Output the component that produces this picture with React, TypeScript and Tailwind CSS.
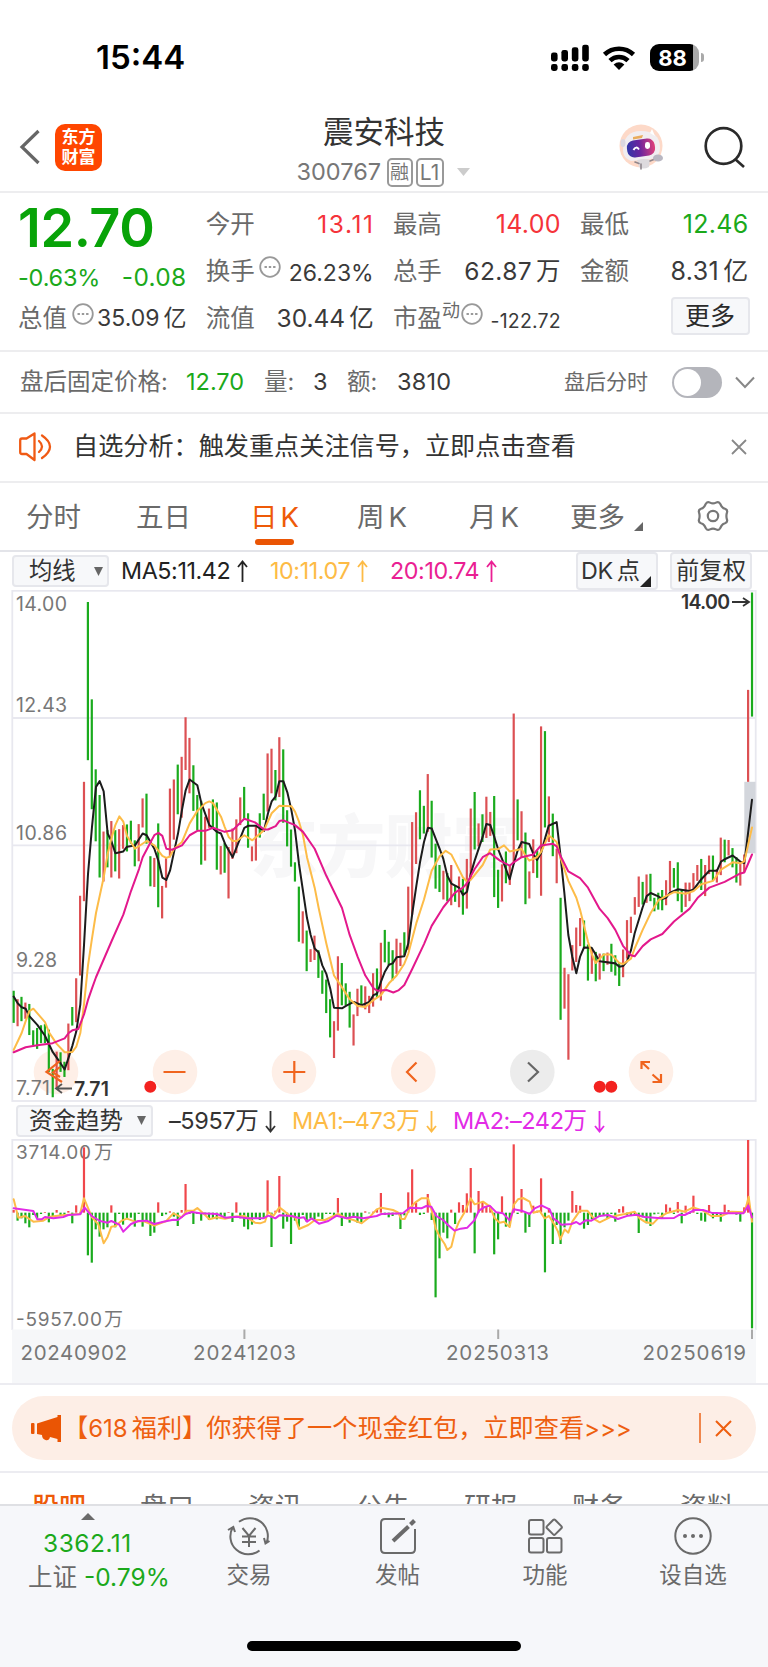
import React from "react";

/* Daily bars: r = up, g = down, then high and low in plot units. */
const CANDLES =
  "g1215,1310 r1240,1320 g1233,1305 r1250,1298 g1254,1346 g1332,1376 g1325,1387 g1317,1370 g1314,1370 g1330,1455 g1446,1530 r1395,1505 g1397,1455 g1425,1470 r1312,1450 g1263,1318 r1178,1308 r934,1170 r597,950 g65,533 g353,678 g560,773 g636,880 r744,892 g740,850 r713,880 g740,862 r737,883 r725,795 g723,803 g712,780 g770,847 r722,832 r646,732 g632,780 g817,906 r822,908 g720,968 r905,1001 r823,910 r617,820 r590,768 g546,693 r523,703 r406,562 r467,631 g548,683 g636,740 g653,842 r700,830 r676,733 g649,735 g658,857 r787,871 g778,866 r790,942 r735,825 r708,808 r643,725 g612,706 g690,792 r788,832 r730,830 g690,762 g632,710 r513,685 r499,631 g562,652 r465,642 g501,718 g681,788 g738,848 g835,892 g907,1070 r980,1075 g1037,1157 r1092,1130 r1052,1124 g1095,1177 g1155,1224 g1182,1281 g1240,1353 r1305,1414 r1113,1333 g1133,1258 g1193,1258 g1218,1324 r1285,1377 r1209,1290 g1199,1260 r1202,1270 r1230,1281 r1163,1262 g1149,1235 r1073,1244 g1035,1131 g1070,1140 g1095,1184 r1061,1165 r1073,1142 g1042,1110 r907,1094 r716,990 r687,840 g622,767 g668,750 r574,745 g653,821 g780,913 g843,923 r860,945 g867,950 r843,962 g905,952 r877,968 g884,990 r825,972 r676,885 g627,797 r720,788 g693,775 r641,763 r686,757 g639,938 g857,970 r841,951 g803,897 r846,902 r395,840 g649,770 r684,820 g747,959 r862,942 r767,867 g800,881 r433,934 g447,732 r640,775 g691,817 r795,897 g940,1301 r1147,1268 r1166,1419 r1080,1155 r1028,1130 r1000,1083 g1007,1090 g1078,1185 r1090,1165 g1100,1187 r1105,1182 g1105,1157 r1102,1138 g1076,1159 g1110,1170 g1133,1201 r1093,1175 r1006,1120 r996,1044 r938,990 r877,967 g893,960 r871,955 g869,950 g940,980 g925,975 g917,977 r888,962 r831,922 g852,910 g835,950 g915,983 r895,967 r895,950 r867,920 r843,890 g825,917 r843,935 r815,870 g815,890 r855,895 r762,873 g768,835 r769,815 g793,850 g820,895 r835,904 r812,865 r325,597 g37,404"
    .split(" ")
    .map((s) => ({ up: s[0] === "r", v: s.slice(1).split(",").map(Number) }));

/* Capital flow bars: end point of each bar; values above the zero line are inflows. */
const ZERO = 368;
const FLOWS = [
  360, 392, 385, 400, 412, 375, 385, 372, 366, 397, 380, 360, 378, 378, 363, 400, 346, 375, 172, 496, 518, 418, 440, 418,
  412, 346, 412, 372, 404, 385, 383, 410, 372, 410, 390, 438, 428, 337, 378, 373, 364, 380, 408, 360, 282, 372, 402, 372,
  392, 375, 390, 385, 388, 378, 380, 366, 396, 337, 385, 410, 418, 404, 385, 390, 385, 271, 471, 362, 258, 416, 395, 462,
  392, 410, 375, 395, 385, 392, 380, 390, 372, 372, 380, 324, 408, 385, 398, 380, 398, 398, 364, 370, 365, 360, 309, 375,
  382, 378, 373, 417, 376, 307, 238, 338, 375, 372, 312, 390, 622, 505, 428, 445, 359, 402, 337, 345, 310, 234, 490, 303,
  335, 350, 348, 493, 448, 319, 410, 408, 163, 372, 297, 428, 411, 347, 362, 265, 547, 355, 462, 405, 462, 412, 392, 303,
  345, 347, 416, 405, 388, 382, 380, 377, 385, 372, 395, 357, 349, 375, 377, 378, 429, 382, 400, 408, 373, 371, 385, 343,
  353, 372, 336, 400, 347, 372, 317, 372, 392, 395, 345, 385, 380, 395, 344, 360, 372, 374, 395, 352, 150, 715,
];

const MA5 =
  "41,1232 53,1252 65,1264 77,1268 88,1290 112,1316 135,1348 158,1396 182,1430 194,1448 206,1412 217,1378 229,1335 241,1255 252,1080 264,870 276,730 288,612 299,595 311,625 323,750 334,772 346,808 370,803 381,789 405,785 428,750 440,755 463,795 475,830 487,880 499,887 510,860 522,805 534,750 546,680 557,622 569,590 592,607 604,660 628,725 651,745 663,750 675,780 698,820 710,790 733,733 745,727 768,727 792,742 804,690 815,655 827,640 838,595 850,595 862,628 874,680 885,740 897,840 921,1000 932,1050 944,1090 956,1102 967,1140 979,1165 991,1210 1002,1265 1026,1267 1038,1260 1061,1248 1085,1258 1108,1248 1120,1228 1131,1224 1143,1188 1155,1158 1167,1138 1178,1134 1190,1116 1213,1113 1225,1075 1237,985 1249,905 1260,835 1272,775 1284,733 1295,735 1307,765 1319,795 1330,825 1342,875 1354,898 1377,910 1389,932 1401,922 1412,870 1424,830 1448,760 1459,722 1471,725 1483,760 1494,795 1506,825 1518,855 1529,885 1541,840 1553,800 1565,775 1588,781 1600,810 1611,828 1623,808 1635,765 1646,727 1670,716 1681,810 1693,925 1705,1050 1717,1115 1729,1163 1740,1115 1752,1087 1775,1088 1787,1108 1799,1128 1846,1134 1858,1144 1869,1142 1881,1128 1893,1095 1904,1045 1928,968 1940,935 1952,926 1975,936 1987,944 1998,940 2010,925 2033,915 2069,920 2081,915 2104,885 2128,860 2151,860 2163,833 2174,826 2198,815 2221,833 2233,837 2244,750 2256,650";
const MA10 =
  "41,1390 53,1365 65,1340 77,1305 88,1275 100,1268 124,1295 135,1308 147,1338 170,1372 194,1397 217,1396 229,1380 241,1340 252,1255 264,1140 276,1060 288,985 311,880 323,810 334,765 346,725 358,699 370,715 381,757 405,795 440,772 463,785 487,816 499,822 510,818 522,795 546,775 569,720 592,683 616,660 628,655 639,660 663,700 674,730 686,760 698,772 710,772 733,755 757,770 792,740 815,690 838,668 874,669 885,685 897,715 909,755 921,820 944,910 956,970 979,1075 1002,1170 1026,1205 1049,1240 1073,1260 1096,1263 1120,1243 1143,1228 1167,1193 1190,1170 1213,1135 1225,1105 1237,1060 1249,1015 1272,945 1295,860 1319,817 1337,801 1354,812 1365,833 1389,880 1401,892 1412,887 1448,843 1471,797 1494,796 1512,785 1529,803 1565,796 1576,815 1588,830 1611,820 1623,805 1646,755 1670,775 1681,820 1705,890 1729,940 1740,975 1764,1070 1775,1105 1787,1133 1811,1108 1834,1108 1858,1133 1869,1136 1893,1120 1904,1090 1928,1035 1952,985 1975,948 1998,935 2022,923 2057,928 2081,920 2104,900 2139,890 2163,857 2198,835 2221,838 2233,832 2244,785 2256,732";
const MA20 =
  "41,1397 77,1382 112,1376 158,1370 194,1356 206,1340 217,1332 235,1328 252,1285 264,1242 276,1208 288,1175 299,1150 334,1070 370,990 393,920 417,855 428,820 452,775 463,755 475,748 487,757 499,795 516,798 546,785 569,755 592,742 616,742 639,733 674,745 698,740 733,706 765,717 792,738 804,738 827,728 838,713 850,711 885,725 909,745 944,795 979,875 1026,970 1049,1050 1073,1115 1096,1170 1120,1207 1132,1215 1160,1213 1180,1220 1195,1214 1213,1198 1237,1150 1272,1077 1295,1023 1330,968 1365,925 1389,910 1401,897 1424,855 1448,820 1470,808 1500,830 1529,845 1541,835 1565,820 1600,812 1623,785 1658,780 1670,788 1681,815 1705,862 1740,882 1764,910 1799,973 1823,1000 1846,1035 1869,1082 1893,1110 1904,1113 1928,1083 1952,1063 1987,1047 2022,1010 2069,972 2093,940 2128,910 2174,893 2221,868 2233,865 2244,840 2256,812";
const FLOW_MA1 =
  "41,328 55,383 75,378 100,395 130,392 150,380 185,376 240,372 252,325 276,382 295,403 311,460 323,440 334,410 346,408 365,392 381,386 405,395 430,393 463,407 499,393 520,370 545,382 560,362 581,362 592,354 616,376 628,388 651,382 675,386 700,380 733,378 745,385 765,398 780,400 795,395 804,365 820,378 838,352 855,365 870,378 885,380 897,417 925,405 945,390 975,390 1014,372 1040,385 1060,390 1085,400 1110,380 1130,358 1144,353 1179,360 1194,367 1204,387 1214,387 1229,355 1246,337 1264,325 1284,325 1296,365 1307,415 1319,440 1334,462 1342,480 1354,470 1365,425 1377,395 1392,370 1412,325 1424,343 1449,335 1470,350 1484,385 1499,398 1512,395 1529,411 1541,345 1554,328 1569,324 1589,335 1600,368 1619,363 1634,385 1647,378 1664,405 1674,425 1681,448 1694,418 1705,428 1717,395 1740,362 1762,362 1784,388 1799,397 1834,380 1874,372 1904,365 1919,385 1934,395 1959,401 1974,385 1999,370 2034,360 2054,365 2080,352 2109,362 2134,378 2164,378 2194,365 2234,367 2246,320 2256,395";
const FLOW_MA2 =
  "41,355 100,363 112,388 125,388 135,381 160,385 190,381 205,375 240,373 254,353 275,378 300,393 323,398 334,393 358,404 370,425 393,402 415,393 440,392 463,402 490,395 520,389 534,390 557,372 575,366 600,370 651,372 675,383 710,380 740,385 790,385 805,377 826,385 838,376 875,378 897,384 912,382 921,395 935,385 957,401 985,393 1010,377 1040,385 1060,380 1090,385 1130,378 1144,372 1209,370 1229,353 1264,355 1279,348 1294,350 1309,378 1329,390 1344,405 1364,422 1382,416 1402,413 1424,390 1437,362 1452,352 1469,347 1489,367 1509,370 1529,391 1541,358 1565,362 1589,372 1604,355 1624,346 1649,358 1660,385 1674,395 1684,404 1714,402 1729,396 1740,403 1757,391 1774,392 1799,378 1824,375 1854,387 1884,377 1909,374 1934,381 1984,385 2022,384 2039,374 2054,375 2084,360 2109,360 2134,368 2164,370 2230,370 2245,347 2256,382";

const barX = (i: number) => 41 + i * 11.72;

function StatusBar() {
  return (
    <div className="flex h-[99px] items-center justify-between pt-4 pr-[64px] pl-[96px]">
      <span className="text-[33px] font-semibold text-black">15:44</span>
      <div className="flex items-center">
        <svg width="40" height="28" viewBox="0 0 40 28" className="mr-3">
          {[0, 1, 2, 3].map((i) => (
            <g key={i} fill="#000">
              <rect x={1 + i * 10.4} y={8.5 - i * 2.6} width="6.6" height={9 + i * 2.6} rx="2.4" />
              <rect x={1 + i * 10.4} y="20" width="6.6" height="7" rx="2.4" />
            </g>
          ))}
        </svg>
        <svg width="34" height="26" viewBox="0 0 34 26" className="mr-[14px]" fill="none" stroke="#000" strokeWidth="4.6">
          <path d="M2.5 9.5 A21 21 0 0 1 31.5 9.5" />
          <path d="M8 15.6 A13 13 0 0 1 26 15.6" />
          <path d="M17 25 L11.6 19.6 Q17 14.8 22.4 19.6 Z" fill="#000" stroke="none" />
        </svg>
        <div className="flex h-[27px] w-[49px] items-center justify-center overflow-hidden rounded-[9px] bg-[linear-gradient(90deg,#000_88%,#a9a9a9_88%)] pr-1 text-[22px] font-bold leading-none text-white">
          88
        </div>
        <div className="ml-[2px] h-[9px] w-[3px] rounded-r-full bg-[#a9a9a9]" />
      </div>
    </div>
  );
}

function Robot() {
  return (
    <svg width="46" height="46" viewBox="0 0 46 46" className="mt-[3px]">
      <defs>
        <linearGradient id="visor" x1="0" x2="1">
          <stop offset="0" stopColor="#3136a8" />
          <stop offset="0.45" stopColor="#6a249e" />
          <stop offset="1" stopColor="#e0407a" />
        </linearGradient>
      </defs>
      <circle cx="22" cy="22" r="21.500" fill="#fdd9c8" />
      <path d="M4 26C4 14 10 7 22 7S41 12 41 24Q41 33 32 35L12 37Q4 34 4 26Z" fill="#f1eef1" />
      <path d="M31 9L33 5L36 12Z" fill="#fff" />
      <ellipse cx="4" cy="19" rx="2.500" ry="4" fill="#dcd8e0" />
      <path d="M14 13L24 11L23 14L14 15.500Z" fill="#e9ac5c" />
      <rect x="8" y="15.500" width="28" height="17" rx="7" fill="url(#visor)" transform="rotate(-8 22 24)" />
      <path d="M14.500 26Q17 21.500 20 25.500" fill="none" stroke="#fff" strokeWidth="2" />
      <rect x="26" y="18" width="5" height="7" rx="2.400" fill="#fff" />
      <path d="M18 36Q25 34 31 36L30 43Q24 46 20 43Z" fill="#dddade" />
      <path d="M16 38l4 1.500M31 37l5-2M22 40v5" stroke="#8f868c" strokeWidth="1.600" strokeLinecap="round" />
      <ellipse cx="39" cy="34" rx="5" ry="3.600" fill="#b9b7c2" />
    </svg>
  );
}

function Header() {
  return (
    <div className="flex h-[92px] items-center pr-[22px] pl-[19px]">
      <div className="flex w-[206px] items-center pt-[4px]">
        <svg width="22" height="36" viewBox="0 0 22 36" fill="none" stroke="#666" strokeWidth="3.2">
          <path d="M19.5 2L3 18L19.5 34" />
        </svg>
        <div className="ml-[14px] flex h-[47px] w-[47px] flex-col items-center justify-center rounded-[10px] bg-[#ff4600] text-[17px] font-bold leading-[20px] text-white">
          <span>东方</span>
          <span>财富</span>
        </div>
      </div>
      <div className="flex flex-1 flex-col items-center pt-[12px] pr-[76px]">
        <div className="h-[42px] text-[30.5px] leading-[40px] text-[#333]">震安科技</div>
        <div className="flex h-[37px] items-center pr-[2px]">
          <span className="w-[90px] text-[23.5px] text-[#777]">300767</span>
          <span className="flex h-[29px] w-[26px] items-center justify-center rounded-[5px] border-2 border-[#999] text-[19px] leading-none text-[#777]">
            融
          </span>
          <span className="ml-[3px] flex h-[29px] w-[28px] items-center justify-center rounded-[5px] border-2 border-[#999] text-[21px] leading-none text-[#777]">
            L1
          </span>
          <svg width="13" height="8" viewBox="0 0 13 8" className="ml-[13px]">
            <path d="M0 0H13L6.5 8Z" fill="#ccc" />
          </svg>
        </div>
      </div>
      <div className="flex w-[127px] items-center justify-between">
        <Robot />
        <svg width="43" height="44" viewBox="0 0 43 44" fill="none" stroke="#2a2a2a" strokeWidth="2.7" className="mt-1">
          <circle cx="20.500" cy="21" r="17.800" />
          <path d="M32 34L41 42" />
        </svg>
      </div>
    </div>
  );
}

const Dots = () => (
  <svg width="22" height="22" viewBox="0 0 22 22" className="mb-[9px] shrink-0">
    <circle cx="11" cy="11" r="9.8" fill="none" stroke="#999" strokeWidth="1.8" />
    <path d="M5.5 11h2.4M9.8 11h2.4M14.1 11h2.4" stroke="#999" strokeWidth="2.2" />
  </svg>
);

function Stat({ label, value, color = "text-[#3a3a3a]", extra, small = "text-[24.5px] tracking-[0.4px]" }: { label: string; value: React.ReactNode; color?: string; extra?: React.ReactNode; small?: string }) {
  return (
    <div className="flex h-[47px] items-center">
      <span className="text-[24.5px] text-[#6a6a6a]">{label}</span>
      {extra}
      <span className={"ml-auto whitespace-nowrap " + small + " " + color}>{value}</span>
    </div>
  );
}

function Quote() {
  return (
    <div className="grid h-[159px] grid-cols-[168.500px_168px_168px_168.500px] gap-x-[19.2px] border-t-2 border-[#ededef] pt-[8px] pl-[18px]">
      <div>
        <div className="h-[53px] text-[54px] font-semibold leading-[53px] tracking-[-0.4px] text-[#08a308]">12.70</div>
        <div className="flex h-[41px] items-center justify-between pt-[6px] text-[#1ba91b]">
          <span className="text-[23.5px] tracking-[-0.2px]">-0.63%</span>
          <span className="text-[24.5px] tracking-[0.3px]">-0.08</span>
        </div>
        <Stat label="总值" extra={<span className="ml-[5px]"><Dots /></span>} value={<>35.09<span className="ml-1">亿</span></>} small="text-[23px]" />
      </div>
      <div>
        <Stat label="今开" value="13.11" color="text-[#f5333a]" small="text-[24.5px] tracking-[1.6px] -mr-[1px]" />
        <Stat label="换手" extra={<span className="ml-[4px]"><Dots /></span>} value="26.23%" small="text-[23px] pt-[3px]" />
        <Stat label="流值" value={<>30.44<span className="ml-1">亿</span></>} small="text-[24.5px]" />
      </div>
      <div>
        <Stat label="最高" value="14.00" color="text-[#f5333a]" small="text-[25px] tracking-[0.3px]" />
        <Stat label="总手" value={<>62.87<span className="ml-1">万</span></>} />
        <Stat
          label="市盈"
          extra={<><span className="mb-4 text-[18px] leading-none text-[#6a6a6a]">动</span><span className="ml-[1px]"><Dots /></span></>}
          value="-122.72"
          small="text-[19.5px] tracking-[0.2px] pt-[6px]"
        />
      </div>
      <div>
        <Stat label="最低" value="12.46" color="text-[#1ba91b]" small="text-[25px] tracking-[0.3px]" />
        <Stat label="金额" value={<>8.31<span className="ml-1">亿</span></>} small="text-[25px] tracking-[0.4px]" />
        <div className="flex h-[47px] items-center justify-end pb-[5px]">
          <button className="-mr-[1px] h-[38px] w-[79px] rounded-[4px] border-2 border-[#e6e7ec] bg-[#f7f8fa] text-[25px] leading-none text-[#2b2b2b]">更多</button>
        </div>
      </div>
    </div>
  );
}

function AfterHours() {
  return (
    <div className="flex h-[62px] items-center border-t-2 border-[#ededef] pl-[20px] text-[23.5px] text-[#3a3a3a]">
      <span className="w-[166px] text-[#6a6a6a]">盘后固定价格:</span>
      <span className="w-[78px] text-[#1ba91b]">12.70</span>
      <span className="w-[49px] text-[#6a6a6a]">量:</span>
      <span className="w-[34px]">3</span>
      <span className="w-[50px] text-[#6a6a6a]">额:</span>
      <span className="w-[167px] tracking-[0.2px]">3810</span>
      <span className="w-[108px] text-[21px] text-[#6a6a6a]">盘后分时</span>
      <span className="flex h-[31px] w-[50px] items-center rounded-full bg-[#b4b5bb] p-[2px]">
        <span className="h-[27px] w-[27px] rounded-full bg-white" />
      </span>
      <svg width="20" height="13" viewBox="0 0 20 13" className="ml-[13px]" fill="none" stroke="#888" strokeWidth="2">
        <path d="M1 1.5L10 11L19 1.5" />
      </svg>
    </div>
  );
}

function Notice() {
  return (
    <div className="flex h-[69px] items-center border-t-2 border-[#ededef] pb-[2px] pl-[19px]">
      <svg width="34" height="30" viewBox="0 0 34 30" fill="none" stroke="#f05a14" strokeWidth="2.300" strokeLinejoin="round">
        <path d="M7.5 6.5H3Q1.200 6.500 1.200 8.500V20Q1.200 22 3 22H7.500L15.500 28V1.500Z" />
        <path d="M20 9Q26 14.5 20 20M23 3.5Q39 14.5 23 26" strokeLinecap="round" />
      </svg>
      <span className="ml-[20px] w-[658px] text-[25.15px] text-[#333]">自选分析：触发重点关注信号，立即点击查看</span>
      <svg width="16" height="16" viewBox="0 0 16 16" stroke="#888" strokeWidth="1.8">
        <path d="M1 1L15 15M15 1L1 15" />
      </svg>
    </div>
  );
}

function PeriodTabs() {
  return (
    <div className="flex h-[69px] items-center border-t-2 border-[#ededef] pb-[1px] text-[27.5px] text-[#6a6a6a]">
      <span className="w-[136px] pt-[3px] pl-[26px]">分时</span>
      <span className="w-[114px] pt-[3px]">五日</span>
      <span className="relative w-[107px] pt-[3px] text-[#ee5a08]">
        日<span className="ml-[3px]">K</span>
        <span className="absolute top-[45px] left-[5px] h-[6px] w-[39px] rounded-full bg-[#ea5504]" />
      </span>
      <span className="w-[112px] pt-[3px]">
        周<span className="ml-[4px]">K</span>
      </span>
      <span className="w-[101px] pt-[3px]">
        月<span className="ml-[4px]">K</span>
      </span>
      <span className="flex w-[126px] items-center pt-[3px]">
        更多
        <svg width="9" height="9" viewBox="0 0 9 9" className="mt-[17px] ml-[9px]">
          <path d="M9 0V9H0Z" fill="#666" />
        </svg>
      </span>
      <svg width="34" height="32" viewBox="0 0 34 32" fill="none" stroke="#777" strokeWidth="2.2" strokeLinejoin="round">
        <path d="M10 3.5Q11.5 1.2 14 2.6Q17 4.2 20 2.6Q22.5 1.2 24 3.5L25.6 6.4Q26.7 8.2 29 8.8Q31.8 9.8 31 12.4Q29.8 16 31 19.6Q31.8 22.2 29 23.2Q26.7 23.8 25.6 25.6L24 28.5Q22.5 30.8 20 29.4Q17 27.8 14 29.4Q11.5 30.8 10 28.5L8.4 25.6Q7.3 23.8 5 23.2Q2.2 22.2 3 19.6Q4.2 16 3 12.4Q2.2 9.8 5 8.8Q7.3 8.2 8.4 6.4Z" />
        <circle cx="17" cy="16" r="5.2" />
      </svg>
    </div>
  );
}

const Arrow = ({ down = false }: { down?: boolean }) => (
  <svg width="11" height="23" viewBox="0 0 11 23" fill="none" stroke="currentColor" strokeWidth="1.8" className={down ? "rotate-180" : ""}>
    <path d="M5.5 22V1.500M1 7L5.500 1.500L10 7" />
  </svg>
);

const Caret = () => (
  <svg width="9" height="9" viewBox="0 0 9 9">
    <path d="M0 0H9L4.5 9Z" fill="#666" />
  </svg>
);

function MaRow() {
  return (
    <div className="flex h-[40px] items-center border-t-2 border-[#e3e4e9] pl-[12px] text-[23.3px] tracking-[-0.4px]">
      <div className="flex h-[32px] w-[97px] items-center justify-between rounded-[4px] border-2 border-[#e6e7ec] bg-[#f7f8fa] pr-1 pl-[15px] tracking-normal text-[#333]">
        均线 <Caret />
      </div>
      <span className="ml-[12px] flex w-[149px] items-center gap-[7px] text-[#222]">MA5:11.42 <Arrow /></span>
      <span className="flex w-[120px] items-center gap-[7px] text-[#fdbb45]">10:11.07 <Arrow /></span>
      <span className="flex w-[186px] items-center gap-[7px] text-[#ea1f93]">20:10.74 <Arrow /></span>
      <div className="flex h-[38px] w-[82px] items-center rounded-[4px] border-2 border-[#e6e7ec] bg-[#f7f8fa] pl-[3px] text-[#333]">
        DK<span className="ml-1">点</span>
        <svg width="11" height="11" viewBox="0 0 11 11" className="mt-[20px]">
          <path d="M11 0V11H0Z" fill="#222" />
        </svg>
      </div>
      <div className="ml-[12px] flex h-[38px] w-[82px] items-center justify-center whitespace-nowrap rounded-[4px] border-2 border-[#e6e7ec] bg-[#f7f8fa] tracking-normal text-[#333]">
        前复权
      </div>
    </div>
  );
}

const LINE = { fill: "none", strokeLinejoin: "round" as const, strokeLinecap: "round" as const };

function PriceChart() {
  return (
    <svg width="768" height="512" viewBox="0 590 768 512" className="block" fontFamily="Inter">
      <text x="250" y="872" fontSize="68" fontWeight="900" fill="#f7f7f8" textLength="270" fontFamily="Noto Sans CJK SC">东方财富</text>
      <g stroke="#e8e8ef" strokeWidth="1.8" fill="none">
        <rect x="12.3" y="590.8" width="743.4" height="510.2" />
        <path d="M12 718H756M12 845.4H756M12 972.8H756" />
      </g>
      <rect x="744.3" y="781.8" width="11.2" height="71.5" fill="#d3d6dc" />
      <g fill="#feefe7">
        <circle cx="56" cy="1072" r="22.3" />
        <circle cx="175" cy="1072" r="22.3" />
        <circle cx="294" cy="1072" r="22.3" />
        <circle cx="413.3" cy="1072" r="22.3" />
        <circle cx="651" cy="1072" r="22.3" />
        <circle cx="532.3" cy="1072" r="22.3" fill="#ececec" />
      </g>
      <g transform="translate(0 580) scale(0.33333 0.33807)">
        {CANDLES.map((c, i) => (
          <path key={i} d={`M${barX(i)} ${c.v[0]}V${c.v[1]}`} stroke={c.up ? "#dc5053" : "#1aab1d"} strokeWidth="6.6" />
        ))}
        <polyline points={MA5} {...LINE} stroke="#1c1c1c" strokeWidth="6" />
        <polyline points={MA10} {...LINE} stroke="#fdbc48" strokeWidth="6" />
        <polyline points={MA20} {...LINE} stroke="#e3188c" strokeWidth="6" />
      </g>
      <g fill="none" stroke="#f0641e" strokeWidth="2.2">
        <path d="M60 1061L46.5 1072L62 1082M60 1067L53 1072.5L60 1077" />
        <path d="M163.5 1072H185.5M283.3 1072H305.3M294.3 1061V1083" />
        <path d="M416.5 1062.5L407 1072L416.5 1081.5" />
        <path d="M641.5 1069V1062H650M641.5 1062L649 1069M661 1074V1082H652.5M652.5 1074.5L661 1082" />
        <path d="M528 1062.5L538 1072L528 1081.5" stroke="#666" />
      </g>
      <g fill="#f3221f">
        <circle cx="150.3" cy="1086.8" r="6" />
        <circle cx="599.7" cy="1086.8" r="6" />
        <circle cx="611.3" cy="1086.8" r="6" />
      </g>
      <g fontSize="19.5" fill="#777">
        <text x="16" y="611" textLength="51">14.00</text>
        <text x="16" y="711.5" textLength="51">12.43</text>
        <text x="16" y="839.5" textLength="51">10.86</text>
        <text x="16" y="966.5" textLength="41">9.28</text>
        <text x="16" y="1094.5" textLength="34">7.71</text>
      </g>
      <g fontSize="19.5" fontWeight="600" fill="#333">
        <text x="74" y="1095.5" textLength="35">7.71</text>
        <text x="681" y="609" textLength="49">14.00</text>
      </g>
      <path d="M56 1088.5H72M62 1084L56 1088.5L62 1093" fill="none" stroke="#555" strokeWidth="1.8" />
      <path d="M732 602H748M743 598L749 602L743 606" fill="none" stroke="#333" strokeWidth="1.8" />
    </svg>
  );
}

function FlowRow() {
  return (
    <div className="flex h-[37px] items-center pl-[16px] text-[23.5px] tracking-[-0.4px]">
      <div className="flex h-[32px] w-[137px] items-center justify-between rounded-[4px] border-2 border-[#e6e7ec] bg-[#f7f8fa] pr-[5px] pl-[11px] tracking-normal text-[#333]">
        资金趋势 <Caret />
      </div>
      <span className="ml-[16px] flex w-[123px] items-center gap-[7px] pt-[1px] text-[#333]">–5957万 <Arrow down /></span>
      <span className="flex w-[161px] items-center gap-[7px] pt-[1px] text-[#fdbb45]">MA1:–473万 <Arrow down /></span>
      <span className="flex items-center gap-[7px] pt-[1px] text-[#e22be6]">MA2:–242万 <Arrow down /></span>
    </div>
  );
}

function FlowChart() {
  return (
    <svg width="768" height="244" viewBox="0 1139 768 244" className="block" fontFamily="Inter, Noto Sans CJK SC">
      <path d="M12.3 1330V1139.8H755.7V1330" fill="none" stroke="#e8e8ef" strokeWidth="1.8" />
      <rect x="12" y="1329.5" width="744" height="54.5" fill="#f6f7f9" />
      <g fontSize="19" fill="#777">
        <text x="16" y="1159" textLength="75">3714.00</text>
        <text x="94" y="1159">万</text>
        <text x="16" y="1326" textLength="86">-5957.00</text>
        <text x="104" y="1326">万</text>
      </g>
      <g transform="translate(0 1090) scale(0.33333)">
        {FLOWS.map((y, i) => (
          <path key={i} d={`M${barX(i)} ${ZERO}V${y}`} stroke={y < ZERO ? "#f0474b" : "#1aab1d"} strokeWidth="6.6" />
        ))}
        <polyline points={FLOW_MA1} {...LINE} stroke="#fdbc48" strokeWidth="6" />
        <polyline points={FLOW_MA2} {...LINE} stroke="#e22be6" strokeWidth="6" />
      </g>
      <path d="M244.4 1329.5V1339M498.2 1329.5V1339M752 1329.5V1339" stroke="#aaa" strokeWidth="2" />
      <g fontSize="20.5" fill="#777">
        <text x="20.5" y="1360" textLength="106.500">20240902</text>
        <text x="193" y="1360" textLength="103">20241203</text>
        <text x="446" y="1360" textLength="103">20250313</text>
        <text x="642.5" y="1360" textLength="103.500">20250619</text>
      </g>
    </svg>
  );
}

function Promo() {
  return (
    <div className="h-[88px] border-t-2 border-[#ececf1] px-[12px] pt-[11px]">
      <div className="flex h-[64px] items-center rounded-full bg-[#fdeee6] pl-[19px] text-[#ee5f10]">
        <svg width="31" height="27" viewBox="0 0 31 27" fill="#ea5504">
          <rect x="0" y="8" width="3.5" height="11" rx="1" />
          <path d="M6 8.5L26.5 2V0H30V27H26.5V24L19 22Q18 26 14.5 25Q11 24 11 20L6 19Z" />
        </svg>
        <span className="ml-[1px] w-[637px] whitespace-nowrap pt-[2px] text-[25.2px]">
          【<span className="text-[24px]">618</span>
          <span className="ml-1">福利</span>】<span className="-ml-[1px]">你获得了一个现金红包，立即查看</span>
          <span className="text-[24px]">&gt;&gt;&gt;</span>
        </span>
        <span className="-ml-[1px] h-[30px] w-[2px] bg-[#f0864c]" />
        <svg width="17" height="17" viewBox="0 0 17 17" className="ml-[14px]" stroke="#ee5f10" strokeWidth="2">
          <path d="M1 1L16 16M16 1L1 16" />
        </svg>
      </div>
    </div>
  );
}

function SectionTabs() {
  return (
    <div className="flex h-[33px] overflow-hidden border-t-2 border-[#ececf1] pt-[17px] pl-[32px] text-[27px] leading-[36px] text-[#6a6a6a]">
      <span className="w-[108px] shrink-0 font-medium text-[#ee5a08]">股吧</span>
      {["盘口", "资讯", "公告", "研报", "财务", "资料"].map((t) => (
        <span key={t} className="w-[108px] shrink-0">
          {t}
        </span>
      ))}
    </div>
  );
}

function NavItem({ label, className, children }: { label: string; className: string; children: React.ReactNode }) {
  return (
    <div className={"flex flex-col items-center pt-[10px] " + className}>
      <svg width="44" height="40" viewBox="0 0 44 40" fill="none" stroke="#6a6a6a" strokeWidth="2">
        {children}
      </svg>
      <span className="mt-[3px] text-[22.5px] leading-[32px] text-[#6a6a6a]">{label}</span>
    </div>
  );
}

function BottomBar() {
  return (
    <div className="h-[163px] border-t-2 border-[#dfe0e4] bg-[#f6f7fa]">
      <div className="flex h-[135px]">
        <div className="w-[175px] pt-[7px]">
          <svg width="14" height="7" viewBox="0 0 14 7" className="ml-[81px]">
            <path d="M0 7H14L7 0Z" fill="#6a6a6a" />
          </svg>
          <div className="mt-[7px] pl-[43px] text-[24.5px] leading-[32px] tracking-[0.5px] text-[#1ba91b]">3362.11</div>
          <div className="pl-[28px] text-[24.5px] leading-[36px] whitespace-nowrap text-[#6a6a6a]">
            上证<span className="ml-[7px] text-[24.5px] text-[#1ba91b]">-0.79%</span>
          </div>
        </div>
        <NavItem label="交易" className="w-[148px]">
          <path d="M12 5.8A18 18 0 0 1 39.5 27M32.5 34.5A18 18 0 0 1 6 11M1 14L6.3 11L8 16M42.5 25L38.5 27.5L37 22" />
          <path d="M15.5 12L22 20L28.500 12M22 20V31M15 20.500H29M15 26H29" />
        </NavItem>
        <NavItem label="发帖" className="w-[149px]">
          <path d="M29 3H9Q5 3 5 7V33Q5 37 9 37H35Q39 37 39 33V13" />
          <path d="M17 25L32.500 10.500" strokeWidth="4" />
          <path d="M34.500 8.500L38.500 4.500" strokeWidth="4" />
        </NavItem>
        <NavItem label="功能" className="w-[146px]">
          <rect x="6" y="4" width="14.500" height="14.500" rx="2" />
          <rect x="6" y="22" width="14.500" height="14.500" rx="2" />
          <rect x="24" y="22" width="14.500" height="14.500" rx="2" />
          <rect x="25.400" y="5.400" width="11.600" height="11.600" rx="1.500" transform="rotate(45 31.2 11.2)" />
        </NavItem>
        <NavItem label="设自选" className="w-[150px]">
          <circle cx="22" cy="20" r="17.700" />
          <g fill="#6a6a6a" stroke="none">
            <circle cx="14" cy="20" r="2" />
            <circle cx="22" cy="20" r="2" />
            <circle cx="30" cy="20" r="2" />
          </g>
        </NavItem>
      </div>
      <div className="mx-auto h-[10px] w-[274px] rounded-full bg-black" />
    </div>
  );
}

export default function App() {
  return (
    <div className="h-[1667px] w-[768px] overflow-hidden bg-white font-['Inter','Noto_Sans_CJK_SC',sans-serif]">
      <StatusBar />
      <Header />
      <Quote />
      <AfterHours />
      <Notice />
      <PeriodTabs />
      <MaRow />
      <PriceChart />
      <FlowRow />
      <FlowChart />
      <Promo />
      <SectionTabs />
      <BottomBar />
    </div>
  );
}
